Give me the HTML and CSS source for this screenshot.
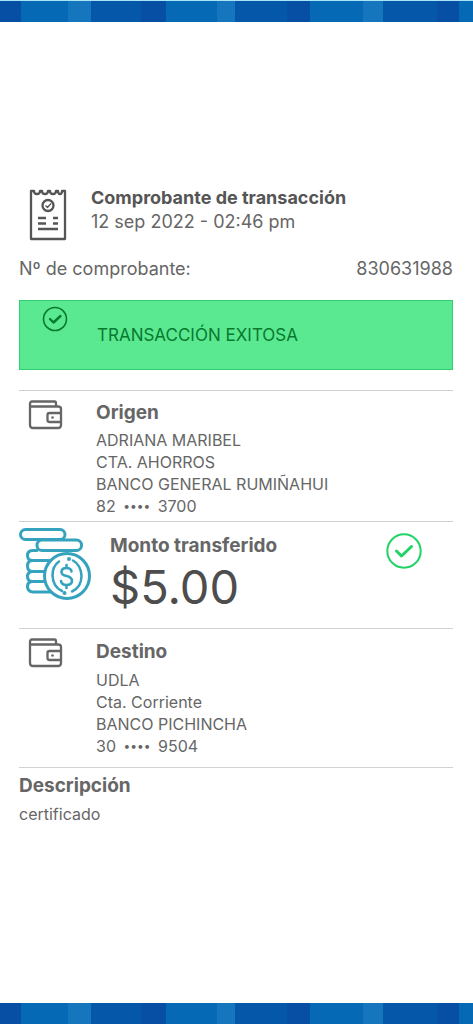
FILE: index.html
```html
<!DOCTYPE html>
<html lang="es">
<head>
<meta charset="utf-8">
<meta name="viewport" content="width=device-width, initial-scale=1">
<title>Comprobante de transacción</title>
<link rel="stylesheet" href="styles.css">
</head>
<body>
<div class="band band-top"></div>
<main class="receipt">
  <header class="head">
    <svg class="icon-receipt" width="38" height="52" viewBox="0 0 38 52" fill="none" stroke="#555" stroke-width="2.300" stroke-linejoin="round" aria-hidden="true">
      <path d="M2 2h3q0 3 3 3t3-3h2q0 3 3 3t3-3h2q0 3 3 3t3-3h2q0 3 2 3t2-3h3v48H2z"/>
      <circle cx="19" cy="16.500" r="5.500"/>
      <path d="M16.500 16.500l2 2 3.500-4" stroke-width="1.300"/>
      <path d="M9 29h8M24 29h5M9 34.500h8M24 34.500h5M9 40h20"/>
    </svg>
    <div>
      <h1 class="title">Comprobante de transacción</h1>
      <p class="date">12 sep 2022 - 02:46 pm</p>
    </div>
  </header>
  <div class="number"><span>Nº de comprobante:</span><span>830631988</span></div>
  <div class="alert" role="status">
    <svg class="alert-icon" width="26" height="26" viewBox="0 0 26 26" fill="none" stroke="#08792f" aria-hidden="true">
      <circle cx="13" cy="13" r="11.500" stroke-width="1.600"/>
      <path d="M8 13l3.500 3.500 7-6.500" stroke-width="2.400" stroke-linecap="round" stroke-linejoin="round"/>
    </svg>
    <span class="alert-text">TRANSACCIÓN EXITOSA</span>
  </div>
  <section class="account account-origin">
    <svg width="35" height="30" viewBox="0 0 35 30" fill="none" stroke="#666" stroke-width="2.300" stroke-linejoin="round" aria-hidden="true">
      <path d="M2 6.500V25q0 3 3 3h25q3 0 3-3V9q0-2.500-3-2.500H2V4q0-2.500 2-2.500h22.500q1.500 0 1.500 2v3"/>
      <path d="M33 13H21.500q-2 0-2 2v5q0 2 2 2H33"/>
      <circle cx="24.500" cy="17.500" r="1.300" fill="#666" stroke="none"/>
    </svg>
    <div>
      <h2 class="heading">Origen</h2>
      <p class="lines">ADRIANA MARIBEL<br>CTA. AHORROS<br>BANCO GENERAL RUMIÑAHUI<br>82 <span class="mask">••••</span> 3700</p>
    </div>
  </section>
  <section class="amount">
    <svg width="74" height="75" viewBox="0 0 74 75" fill="none" stroke="#35a3bd" stroke-width="3" stroke-linecap="round" aria-hidden="true">
      <rect x="1.500" y="2.500" width="44.500" height="10" rx="5"/>
      <rect x="18" y="13" width="44.500" height="10.500" rx="5"/>
      <path d="M18 23.500h-4.500q-5 0-5 5t5 5H30M13.500 33.500q-5 0-5 5.500t5 5.500H25M13.500 44.500q-5 0-5 5t5 5H25M13.500 54.500q-5 0-5 5t5 5.500H31"/>
      <circle cx="48" cy="49" r="22.500"/>
      <path d="M40 34.500Q33.500 39 33.500 48.500 34 60 43 64M53 64.500Q62.500 60 62.500 49 62 38 54 33.500" stroke-width="2.500"/>
      <circle cx="50" cy="32" r="2" fill="#35a3bd" stroke="none"/>
      <circle cx="45.500" cy="66" r="2" fill="#35a3bd" stroke="none"/>
      <path d="M52.500 44.500Q52 41 47.500 41q-5 0-5 4 0 3 5 4t5.500 4.500q0 4.500-5.500 4.500-5 0-5.500-4M47.500 38v3M47.500 58v3" stroke-width="2.600"/>
    </svg>
    <div>
      <h2 class="heading">Monto transferido</h2>
      <p class="value">$5.00</p>
    </div>
    <svg class="amount-ok" width="36" height="36" viewBox="0 0 36 36" fill="none" stroke="#20d365" aria-hidden="true">
      <circle cx="18" cy="18" r="16.700" stroke-width="2"/>
      <path d="M10.500 18l5 5 10-9.500" stroke-width="3" stroke-linecap="round" stroke-linejoin="round"/>
    </svg>
  </section>
  <section class="account account-target">
    <svg width="35" height="30" viewBox="0 0 35 30" fill="none" stroke="#666" stroke-width="2.300" stroke-linejoin="round" aria-hidden="true">
      <path d="M2 6.500V25q0 3 3 3h25q3 0 3-3V9q0-2.500-3-2.500H2V4q0-2.500 2-2.500h22.500q1.500 0 1.500 2v3"/>
      <path d="M33 13H21.500q-2 0-2 2v5q0 2 2 2H33"/>
      <circle cx="24.500" cy="17.500" r="1.300" fill="#666" stroke="none"/>
    </svg>
    <div>
      <h2 class="heading">Destino</h2>
      <p class="lines">UDLA<br>Cta. Corriente<br>BANCO PICHINCHA<br>30 <span class="mask">••••</span> 9504</p>
    </div>
  </section>
  <section class="description">
    <h2 class="heading">Descripción</h2>
    <p class="note">certificado</p>
  </section>
</main>
<div class="band band-bottom"></div>
</body>
</html>
```
FILE: styles.css
```css
* {
  box-sizing: border-box;
}

body {
  margin: 0;
  min-height: 100vh;
  display: flex;
  flex-direction: column;
  background: #fff;
  color: #666;
  font-family: Inter, "Liberation Sans", sans-serif;
}

h1, h2, p {
  margin: 0;
}

svg {
  display: block;
  flex: none;
}

.band {
  height: 22px;
  background: linear-gradient(90deg,
    #064fa4 0 21px, #0569b5 21px 68px, #1676bd 68px 91px,
    #0457a9 91px 141px, #064fa4 141px 166px, #0569b5 166px 217px, #1676bd 217px 235px,
    #0457a9 235px 287px, #064fa4 287px 310px, #0569b5 310px 363px, #1676bd 363px 383px,
    #0457a9 383px 437px, #064fa4 437px 459px, #0569b5 459px);
}

.band-top {
  border-top: 1px solid #a9e4f5;
}

.band-bottom {
  height: 21px;
}

.receipt {
  flex: 1;
  padding: 164px 20px 0 19px;
}

.head {
  display: flex;
  gap: 24px;
  padding-left: 10px;
}

.icon-receipt {
  margin-top: 3px;
}

.title {
  font-size: 18px;
  line-height: 24px;
  font-weight: 700;
  color: #555;
}

.date {
  font-size: 18px;
  line-height: 24px;
}

.number {
  display: flex;
  justify-content: space-between;
  margin-top: 16px;
  font-size: 18px;
  line-height: 24px;
}

.alert {
  display: flex;
  gap: 29px;
  height: 70px;
  margin: 19px 0 20px;
  padding: 5px 22px;
  border: 1px solid #2fd072;
  background: #5ae991;
  color: #08792f;
}

.alert-text {
  align-self: center;
  font-size: 17px;
  line-height: 24px;
}

.account {
  display: flex;
  gap: 33px;
  padding: 9px 0 4px 9px;
  border-top: 1px solid #d2d2d2;
}

.account .heading {
  margin-bottom: 3px;
}

.heading {
  font-size: 19px;
  line-height: 26px;
  font-weight: 700;
}

.lines {
  font-size: 16px;
  line-height: 22px;
}

.mask {
  padding: 0 3px;
  font-size: 12px;
  line-height: 1;
  vertical-align: 2px;
}

.amount {
  display: flex;
  gap: 17px;
  padding: 5px 31px 13px 0;
  border-top: 1px solid #d2d2d2;
}

.amount .heading {
  margin-top: 6px;
}

.value {
  font-size: 47px;
  line-height: 56px;
  color: #4d4d4d;
}

.amount-ok {
  margin: 6px 0 0 auto;
}

.account-target {
  padding-bottom: 10px;
}

.account-target .heading {
  margin: 1px 0 4px;
}

.description {
  padding-top: 5px;
  border-top: 1px solid #d2d2d2;
}

.note {
  margin-top: 4px;
  font-size: 16px;
  line-height: 22px;
}
```
